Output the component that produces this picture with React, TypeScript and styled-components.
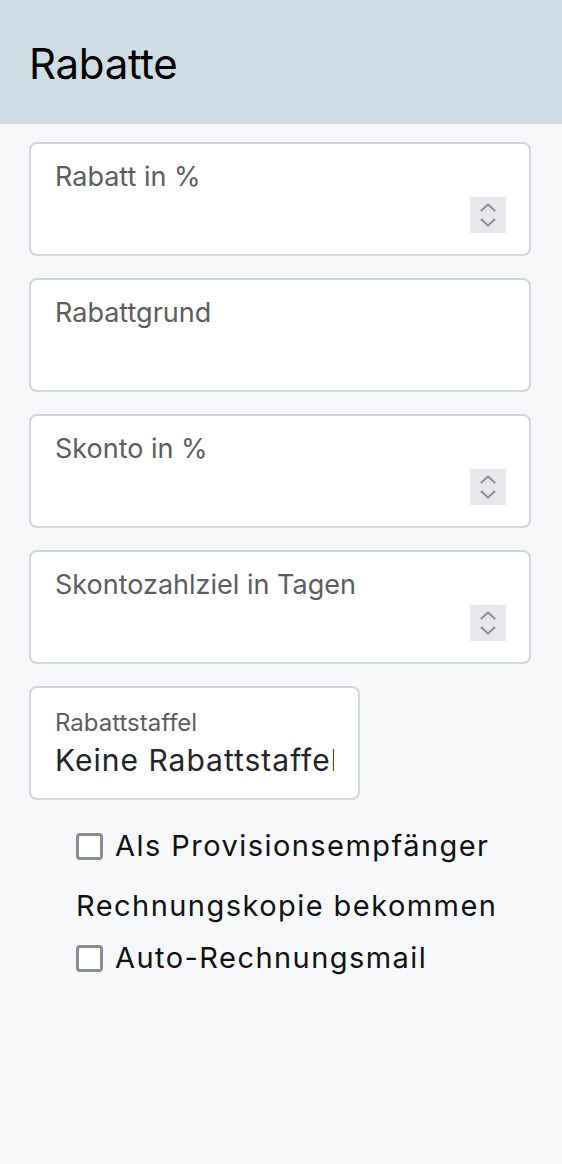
import styled, { createGlobalStyle } from 'styled-components'

const GlobalStyle = createGlobalStyle`
	html, body {
		margin: 0;
		padding: 0;
		background: #f7f8f9;
	}
	body {
		font-family: Inter, 'Liberation Sans', sans-serif;
		min-height: 1164px;
	}
`

const Header = styled.header`
	height: 124px;
	box-sizing: border-box;
	padding: 2px 29px 0;
	display: flex;
	align-items: center;
	background: #cedce5;
`

const Title = styled.h1`
	margin: 0;
	font-size: 42px;
	font-weight: 400;
	color: #000;
	letter-spacing: -0.3px;
`

const Form = styled.div`
	display: flex;
	flex-direction: column;
	gap: 22px;
	padding: 18px 31px 0 29px;
`

const Field = styled.div<{ $width?: number }>`
	display: flex;
	justify-content: space-between;
	box-sizing: border-box;
	height: 114px;
	width: ${(p) => (p.$width ? `${p.$width}px` : 'auto')};
	padding: 16px 24px 0;
	background: #fff;
	border: 2px solid #d3d6da;
	border-radius: 8px;
	overflow: hidden;
`

const FieldBody = styled.div`
	display: flex;
	flex-direction: column;
	min-width: 0;
	flex: 1;
`

const Label = styled.div<{ $floating?: boolean }>`
	font-size: ${(p) => (p.$floating ? '24px' : '27px')};
	line-height: ${(p) => (p.$floating ? '38px' : '34px')};
	color: #5b5d60;
	white-space: nowrap;
`

const Value = styled.div`
	font-size: 30px;
	line-height: 36px;
	letter-spacing: 1px;
	color: #212529;
	white-space: nowrap;
	overflow: hidden;
`

const Spinner = styled.div`
	align-self: flex-end;
	flex: none;
	width: 36px;
	height: 36px;
	margin: 0 -1px 21px 0;
	background: #e8e8ec;
	display: flex;
	align-items: center;
	justify-content: center;
`

const Checks = styled.div`
	margin-top: 16px;
	padding-left: 76px;
	font-size: 29px;
	letter-spacing: 1.45px;
	color: #111;
`

const CheckLine = styled.label<{ $lineHeight: number }>`
	display: block;
	line-height: ${(p) => p.$lineHeight}px;
`

const Box = styled.span`
	display: inline-block;
	box-sizing: border-box;
	width: 27px;
	height: 27px;
	margin-right: 12px;
	vertical-align: -4px;
	background: #fff;
	border: 3px solid #8b8c96;
	border-radius: 4px;
`

const SpinArrows = () => (
	<svg width="20" height="30" viewBox="0 0 20 30" fill="none">
		<path d="M3.5 10.5 L10 4.5 L16.5 10.5" stroke="#8e8f99" strokeWidth="2.2" strokeLinecap="round" strokeLinejoin="round" />
		<path d="M3.5 19.5 L10 25.5 L16.5 19.5" stroke="#8e8f99" strokeWidth="2.2" strokeLinecap="round" strokeLinejoin="round" />
	</svg>
)

const NumberField = ({ label }: { label: string }) => (
	<Field>
		<FieldBody>
			<Label>{label}</Label>
		</FieldBody>
		<Spinner>
			<SpinArrows />
		</Spinner>
	</Field>
)

export default function App() {
	return (
		<>
			<GlobalStyle />
			<Header>
				<Title>Rabatte</Title>
			</Header>
			<Form>
				<NumberField label="Rabatt in %" />
				<Field>
					<FieldBody>
						<Label>Rabattgrund</Label>
					</FieldBody>
				</Field>
				<NumberField label="Skonto in %" />
				<NumberField label="Skontozahlziel in Tagen" />
				<Field $width={331}>
					<FieldBody>
						<Label $floating>Rabattstaffel</Label>
						<Value>Keine Rabattstaffel</Value>
					</FieldBody>
				</Field>
			</Form>
			<Checks>
				<CheckLine $lineHeight={60}>
					<Box />
					Als Provisionsempfänger
					<br />
					Rechnungskopie bekommen
				</CheckLine>
				<CheckLine $lineHeight={44}>
					<Box />
					Auto-Rechnungsmail
				</CheckLine>
			</Checks>
		</>
	)
}
